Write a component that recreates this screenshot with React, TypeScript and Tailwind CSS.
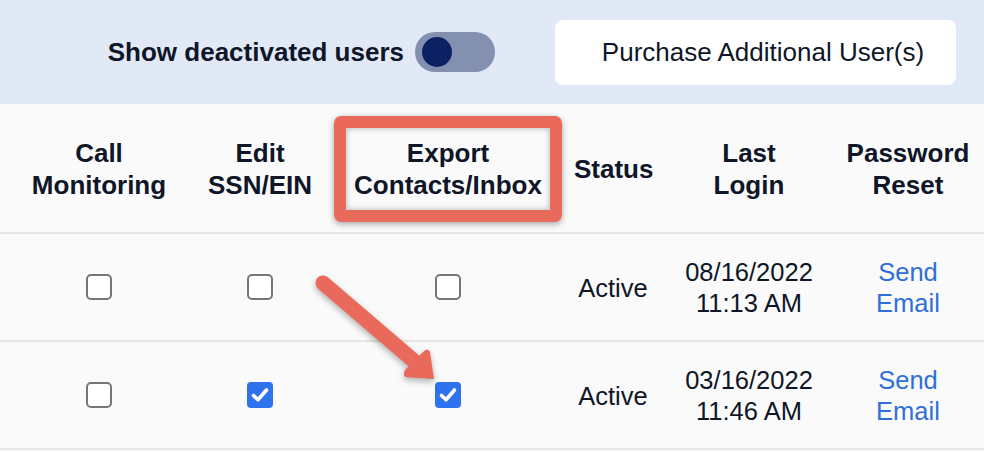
import React from 'react';

type Row = {
  call: boolean;
  ssn: boolean;
  exportInbox: boolean;
  status: string;
  date: string;
  time: string;
};

const rows: Row[] = [
  { call: false, ssn: false, exportInbox: false, status: 'Active', date: '08/16/2022', time: '11:13 AM' },
  { call: false, ssn: true, exportInbox: true, status: 'Active', date: '03/16/2022', time: '11:46 AM' },
];

const cols = 'grid grid-cols-[198px_124px_252px_78px_194px_124px]';

const Checkbox: React.FC<{ checked: boolean }> = ({ checked }) =>
  checked ? (
    <span className="w-[26px] h-[26px] rounded-[4px] bg-[#2f72ee] flex items-center justify-center">
      <svg width="22" height="22" viewBox="0 0 22 22" fill="none">
        <path d="M4.5 11.5 L9 15.8 L17.5 6" stroke="white" strokeWidth="3.6" strokeLinecap="round" strokeLinejoin="round" />
      </svg>
    </span>
  ) : (
    <span className="w-[26px] h-[26px] rounded-[5px] border-2 border-[#767676] bg-white" />
  );

const App: React.FC = () => {
  return (
    <div className="relative w-[984px] h-[452px] overflow-hidden bg-[#fafafa] text-[#0e1628] font-['Liberation_Sans',Arial,sans-serif]">
      {/* top bar */}
      <div className="h-[104px] bg-[#e1e9f6] flex items-center justify-end pr-[28px]">
        <span className="text-[26px] font-bold">Show deactivated users</span>
        <span className="ml-[11px] w-[80px] h-[40px] rounded-full bg-[#8390b0] flex items-center pl-[7px]">
          <span className="w-[30px] h-[30px] rounded-full bg-[#0b2163]" />
        </span>
        <button className="ml-[60px] w-[401px] h-[65px] bg-white rounded-[8px] text-[26px] pl-[15px] text-center">
          Purchase Additional User(s)
        </button>
      </div>

      {/* header */}
      <div className={`${cols} h-[130px] pt-[2px] border-b-2 border-[#e6e6e6] text-[26px] leading-[32px] font-bold text-center items-center`}>
        <div>Call<br />Monitoring</div>
        <div>Edit<br />SSN/EIN</div>
        <div>Export<br />Contacts/Inbox</div>
        <div>Status</div>
        <div>Last<br />Login</div>
        <div>Password<br />Reset</div>
      </div>

      {rows.map((r, i) => (
        <div key={i} className={`${cols} h-[108px] border-b-2 border-[#e6e6e6] text-[25.5px] leading-[31px] text-center items-center`}>
          <div className="flex justify-center"><Checkbox checked={r.call} /></div>
          <div className="flex justify-center"><Checkbox checked={r.ssn} /></div>
          <div className="flex justify-center"><Checkbox checked={r.exportInbox} /></div>
          <div className="pt-[2px]">{r.status}</div>
          <div className="pt-[2px]">{r.date}<br />{r.time}</div>
          <div className="pt-[2px] text-[#2f6fd8]">Send<br />Email</div>
        </div>
      ))}

      {/* highlight box */}
      <div className="absolute left-[334px] top-[116px] w-[228px] h-[106px] rounded-[7px] border-[12px] border-[#e9695a] shadow-[0_2px_6px_rgba(0,0,0,0.35)]">
        <div className="w-full h-full rounded-[2px] shadow-[inset_0_0_6px_rgba(0,0,0,0.3)]" />
      </div>

      {/* arrow */}
      <svg
        className="absolute left-[300px] top-[260px] drop-shadow-[0_3px_3px_rgba(0,0,0,0.3)]"
        width="150"
        height="130"
        viewBox="300 260 150 130"
      >
        <line x1="323" y1="283" x2="414" y2="361" stroke="#e9695a" strokeWidth="15" strokeLinecap="round" />
        <path d="M434 379 L405 377 Q402 372 407 368 L423 352 Q428 347 430 352 Z" fill="#e9695a" />
      </svg>
    </div>
  );
};

export default App;
